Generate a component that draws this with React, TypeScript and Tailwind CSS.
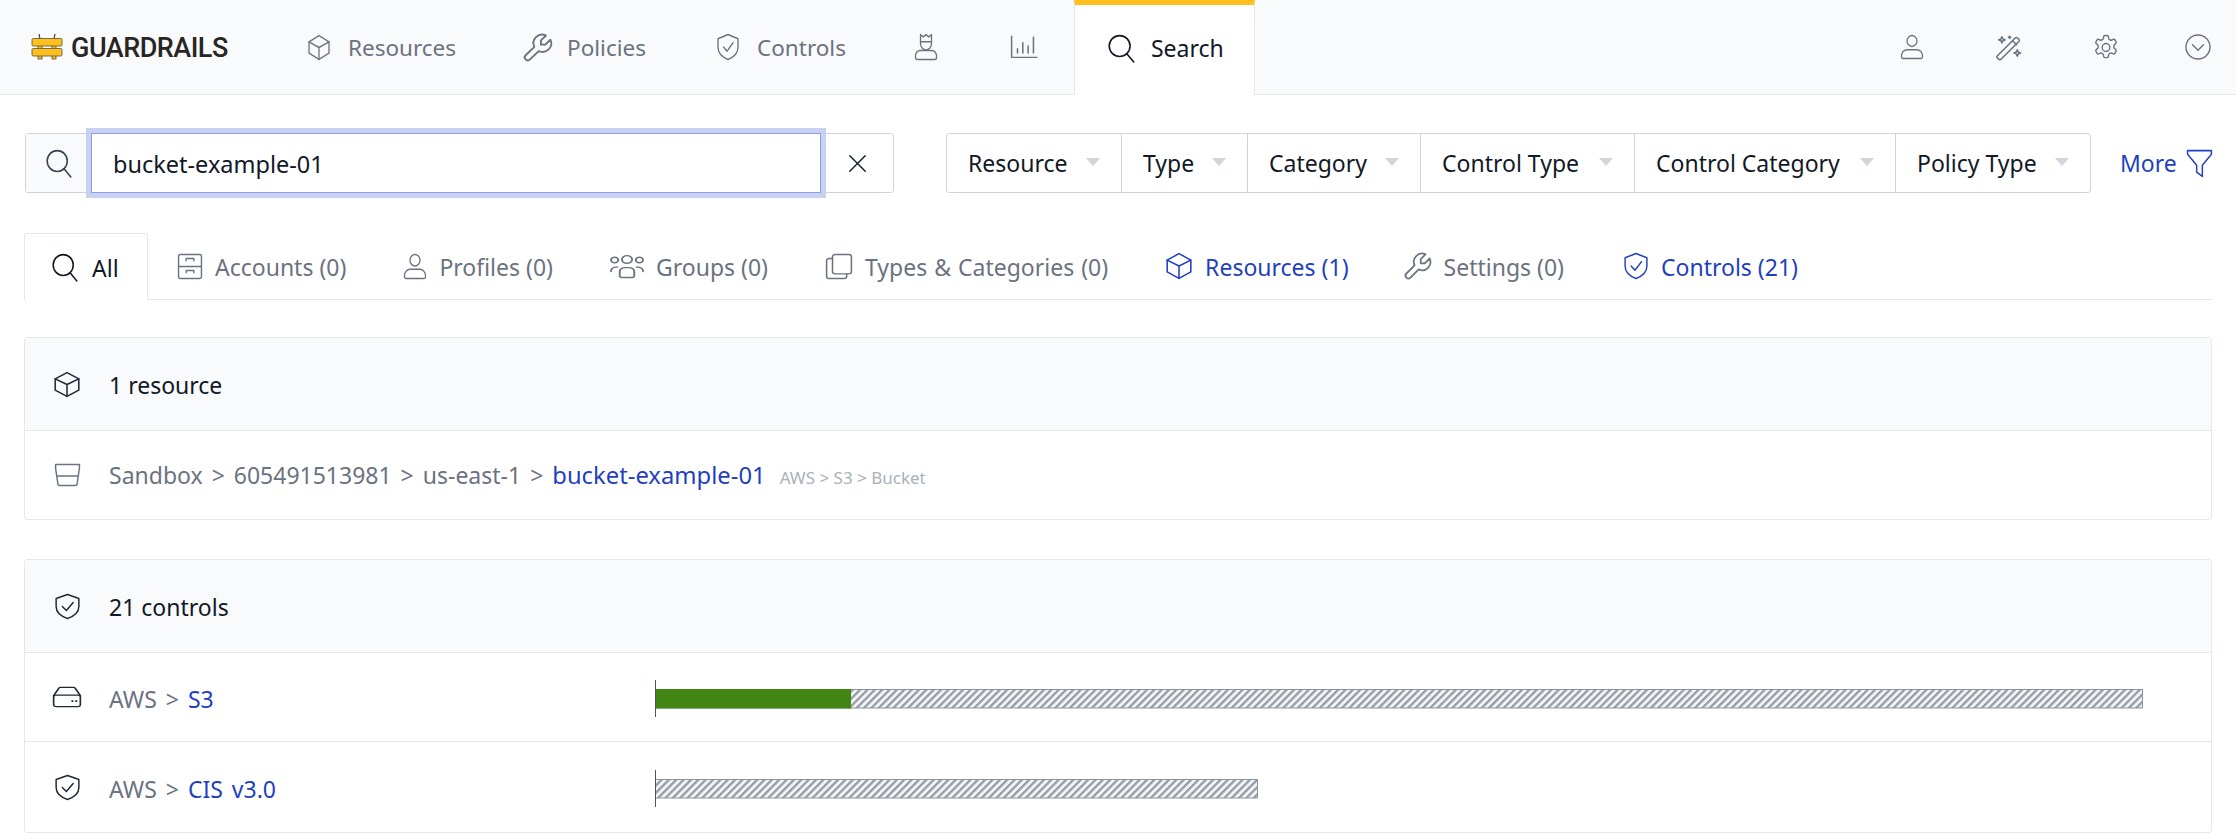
import type { ReactNode } from 'react';

const FONT = { fontFamily: '"Noto Sans", sans-serif' };

const Svg = ({ children, className = 'w-6 h-6' }: { children: ReactNode; className?: string }) => (
  <svg viewBox="1 1 22 22" preserveAspectRatio="none" fill="none" stroke="currentColor" strokeWidth={1.3} strokeLinecap="round" strokeLinejoin="round" className={`${className} shrink-0 overflow-visible`}>
    {children}
  </svg>
);

type IconProps = { className?: string };

const CubeIcon = ({ className }: IconProps) => (
  <Svg className={className}>
    <path d="M12 1.500l10 5.500v10l-10 5.500-10-5.500v-10z" />
    <path d="M2 7l10 5 10-5M12 12v10.500" />
  </Svg>
);
const WrenchIcon = ({ className }: IconProps) => (
  <Svg className={className}>
    <g transform="translate(24 0) scale(-1 1)">
      <path d="M7 10h3V7L6.500 3.500a6 6 0 0 1 8 8l6 6a2 2 0 0 1-3 3l-6-6a6 6 0 0 1-8-8L7 10" />
    </g>
  </Svg>
);
const ShieldIcon = ({ className }: IconProps) => (
  <Svg className={className}>
    <path d="M12 1.500l10 3.500v7c0 5-4 8.500-10 10.500-6-2-10-5.500-10-10.500V5z" />
    <path d="M7.500 12l3.500 3.500 6-7" />
  </Svg>
);
const SearchIcon = ({ className }: IconProps) => (
  <Svg className={className}>
    <circle cx="10.500" cy="10" r="8.500" />
    <path d="M16.500 16.500L22 23" />
  </Svg>
);
const UserIcon = ({ className }: IconProps) => (
  <Svg className={className}>
    <circle cx="12" cy="6.500" r="5" />
    <path d="M1.500 20a5.500 5.500 0 0 1 5.500-5.500h10a5.500 5.500 0 0 1 5.500 5.500v1a1.500 1.500 0 0 1-1.500 1.500H3A1.500 1.500 0 0 1 1.500 21z" />
  </Svg>
);
const WandIcon = ({ className }: IconProps) => (
  <Svg className={className}>
    <path d="M2 19.500L17.500 3.500a1 1 0 0 1 1.500 0l1.500 1.500a1 1 0 0 1 0 1.500L5 22.500a1 1 0 0 1-1.500 0L2 21a1 1 0 0 1 0-1.500z" />
    <path d="M15 6l3.500 3.500" />
    <path d="M6 2.500l.8 2 2 .8-2 .8-.8 2-.8-2-2-.8 2-.8zM12.500 2v2M11.500 3h2M19 14l.8 2 2 .8-2 .8-.8 2-.8-2-2-.8 2-.8z" />
  </Svg>
);
const GearIcon = ({ className }: IconProps) => (
  <Svg className={className}>
    <path d="M9.800 2.500c.1-.6.600-1 1.200-1h2c.6 0 1.100.4 1.200 1l.2 1.500c.1.400.4.800.8 1l.8.400c.4.200.900.200 1.300 0l1.400-.6c.6-.2 1.200 0 1.500.500l1 1.800c.3.500.2 1.200-.3 1.500l-1.200 1c-.3.300-.5.700-.5 1.200v.8c0 .500.2.900.5 1.200l1.200 1c.5.300.6 1 .3 1.500l-1 1.800c-.3.500-.9.700-1.500.500l-1.400-.6c-.4-.2-.9-.2-1.300 0l-.8.400c-.4.200-.7.600-.8 1l-.2 1.500c-.1.600-.6 1-1.200 1h-2c-.6 0-1.100-.4-1.200-1l-.2-1.500c-.1-.4-.4-.8-.8-1l-.8-.4c-.4-.2-.9-.2-1.300 0l-1.400.6c-.6.200-1.200 0-1.500-.5l-1-1.800c-.3-.5-.2-1.200.3-1.500l1.200-1c.3-.3.5-.7.5-1.200v-.8c0-.5-.2-.9-.5-1.200l-1.200-1c-.5-.3-.6-1-.3-1.500l1-1.800c.3-.5.9-.7 1.500-.5l1.400.6c.4.200.9.200 1.300 0l.8-.4c.4-.2.7-.6.8-1z" />
    <circle cx="12" cy="12" r="3.500" />
  </Svg>
);
const ChevronCircleIcon = ({ className }: IconProps) => (
  <Svg className={className}>
    <circle cx="12" cy="12" r="11" />
    <path d="M7 10l5 5 5-5" />
  </Svg>
);
const CrownUserIcon = ({ className }: IconProps) => (
  <Svg className={className}>
    <path d="M6.500 1.500l2.800 2 2.700-2 2.700 2 2.800-2v6H6.500z" />
    <path d="M6.500 7.500V9a5.500 5.500 0 0 0 11 0V7.500" />
    <path d="M1.500 21v-1.500a4.500 4.500 0 0 1 4.500-4.500h12a4.500 4.500 0 0 1 4.500 4.500V21a1.500 1.500 0 0 1-1.500 1.500H3A1.500 1.500 0 0 1 1.500 21z" />
  </Svg>
);
const ChartIcon = ({ className }: IconProps) => (
  <Svg className={className}>
    <path d="M1.500 2v19.500h21.500" />
    <path d="M6.500 13.500v4M11 8v9.500M15.500 11v6.500M20 3v14.500" />
  </Svg>
);
const DrawersIcon = ({ className }: IconProps) => (
  <Svg className={className}>
    <rect x="1.500" y="1.500" width="21" height="21" rx="1.500" />
    <path d="M1.500 12h21M8.500 7V5h7v2M8.500 17.500v-2h7v2" />
  </Svg>
);
const UsersIcon = ({ className }: IconProps) => (
  <Svg className={className}>
    <circle cx="12" cy="6" r="3.500" />
    <circle cx="3.500" cy="6.500" r="2.500" />
    <circle cx="20.500" cy="6.500" r="2.500" />
    <path d="M7 21v-4a3.500 3.500 0 0 1 3.500-3.500h3A3.500 3.500 0 0 1 17 17v4a1.500 1.500 0 0 1-1.500 1.500h-7A1.500 1.500 0 0 1 7 21z" />
    <path d="M1 17a4 4 0 0 1 3-4h1.500M23 17a4 4 0 0 0-3-4h-1.500" />
  </Svg>
);
const CopyIcon = ({ className }: IconProps) => (
  <Svg className={className}>
    <rect x="6.500" y="1.500" width="16" height="17" rx="2" />
    <path d="M6.500 5H3.500a2 2 0 0 0-2 2v13.500a2 2 0 0 0 2 2h13a2 2 0 0 0 2-2v-2" />
  </Svg>
);
const BucketIcon = ({ className }: IconProps) => (
  <Svg className={className}>
    <path d="M1.500 1.500h21v3.500l-2 15.500a2 2 0 0 1-2 2h-13a2 2 0 0 1-2-2L1.500 5z" />
    <path d="M2.700 13h18.600" />
  </Svg>
);
const DriveIcon = ({ className }: IconProps) => (
  <Svg className={className}>
    <path d="M1.500 10.500L5.500 2.500a1.500 1.500 0 0 1 1.500-1h10a1.500 1.500 0 0 1 1.500 1l4 8" />
    <rect x="1.500" y="10" width="21" height="12.500" rx="2" />
    <path d="M15.500 16.500h1.500M18.500 16.500H20" strokeWidth={1.800} strokeLinecap="butt" />
  </Svg>
);
const CloseIcon = ({ className }: IconProps) => (
  <Svg className={className}>
    <path d="M2 2l20 20M22 2L2 22" strokeWidth={1.800} />
  </Svg>
);
const FunnelIcon = ({ className }: IconProps) => (
  <Svg className={className}>
    <path d="M1.500 1.500h21v3l-8 9v9l-5-3.500v-5.500l-8-9z" />
  </Svg>
);

// Guardrails mark: two yellow rails on short posts
const Logo = () => (
  <svg viewBox="0 0 32 28" className="w-8 h-7 shrink-0">
    <path d="M8 1l1 5M24 1l-1 5" stroke="#3f3a2c" strokeWidth={1.200} fill="none" />
    <rect x="7" y="10" width="4" height="16" fill="#fbbf24" stroke="#57503a" strokeWidth={0.8} />
    <rect x="21" y="10" width="4" height="16" fill="#fbbf24" stroke="#57503a" strokeWidth={0.8} />
    <rect x="1" y="5.500" width="30" height="7.500" rx="1.200" fill="#fdc01c" stroke="#57503a" strokeWidth={0.8} />
    <rect x="1" y="15.500" width="30" height="7.500" rx="1.200" fill="#fdc01c" stroke="#57503a" strokeWidth={0.8} />
  </svg>
);

const NAV = [
  { icon: <CubeIcon className="w-[22px] h-[25px]" />, label: 'Resources', pad: 'px-[34px]' },
  { icon: <WrenchIcon className="w-[32px] h-[31px] -ml-[2px] -mr-[5px]" />, label: 'Policies', pad: 'pl-[34px] pr-[37px]' },
  { icon: <ShieldIcon className="w-[22px] h-[26px]" />, label: 'Controls', pad: 'px-[34px]' },
];

const FILTERS = [
  { label: 'Resource', width: 'w-[174px]' },
  { label: 'Type', width: 'w-[126px]' },
  { label: 'Category', width: 'w-[173px]' },
  { label: 'Control Type', width: 'w-[214px]' },
  { label: 'Control Category', width: 'w-[261px]' },
  { label: 'Policy Type', width: 'w-[195px]' },
];

const TABS = [
  { icon: <DrawersIcon className="w-[24px] h-[25px]" />, label: 'Accounts (0)', tone: 'text-[#6b7280] pl-[30px] pr-[29px]' },
  { icon: <UserIcon className="w-[22px] h-[25px]" />, label: 'Profiles (0)', tone: 'text-[#6b7280] px-[29px]' },
  { icon: <UsersIcon className="w-[32px] h-[24px]" />, label: 'Groups (0)', tone: 'text-[#6b7280] px-[29px]' },
  { icon: <CopyIcon className="w-[26px] h-[25px]" />, label: 'Types & Categories (0)', tone: 'text-[#6b7280] px-[29px] [word-spacing:1px]' },
  { icon: <CubeIcon className="w-[26px] h-[26px]" />, label: 'Resources (1)', tone: 'text-[#1f3fc0] pl-[29px] pr-[27px]' },
  { icon: <WrenchIcon className="w-[30px] h-[30px] -mx-[2px]" />, label: 'Settings (0)', tone: 'text-[#6b7280] pl-[29px] pr-[31px]' },
  { icon: <ShieldIcon className="w-[24px] h-[26px]" />, label: 'Controls (21)', tone: 'text-[#1f3fc0] px-[29px]' },
];

const ProgressBar = ({ id, width, done }: { id: string; width: number; done: number }) => (
  <svg width={width + 1} height={37} className="block shrink-0 mt-[2px]">
    <defs>
      <pattern id={id} patternUnits="userSpaceOnUse" width="5.200" height="5.200" patternTransform="rotate(45)">
        <rect width="5.200" height="5.200" fill="#f3f4f6" />
        <rect width="2.300" height="5.200" fill="#959ca5" />
      </pattern>
    </defs>
    <rect x="0.500" y="9.500" width={width} height="18.500" fill={`url(#${id})`} stroke="#8b949e" strokeWidth={1} />
    {done > 0 && <rect x="0" y="9" width={done} height="19.500" fill="#428513" />}
    <path d="M0.500 0v37" stroke="#4b5563" strokeWidth={1} />
  </svg>
);

// fixed slot so every row's text starts at the same x
const IconSlot = ({ children }: { children: ReactNode }) => (
  <div className="w-[28px] flex justify-center shrink-0">{children}</div>
);

const Card = ({ icon, title, children }: { icon: ReactNode; title: string; children: ReactNode }) => (
  <section className="border border-[#e5e7eb] rounded-[3px] bg-white">
    <header className="h-[93px] flex items-center pl-[28px] gap-[28px] bg-[#f9fafb] border-b border-[#e5e7eb] text-[#111827]">
      <IconSlot>{icon}</IconSlot>
      <span className="pt-[2px]">{title}</span>
    </header>
    {children}
  </section>
);

export default function App() {
  return (
    <div style={FONT} className="bg-white h-[835px] overflow-hidden text-[23px] leading-[30px]">
      {/* Top navigation */}
      <nav className="h-[95px] flex bg-[#f9fafb] border-b border-[#e5e7eb] text-[#6b7280] text-[22.5px]">
        <div className="w-[274px] flex items-center pl-[31px] gap-[8px] text-[#292524]">
          <Logo />
          <span style={{ fontFamily: 'Roboto, sans-serif' }} className="pt-[2px] text-[27px] font-medium tracking-[-0.5px]">GUARDRAILS</span>
        </div>
        {NAV.map((item) => (
          <div key={item.label} className={`flex items-center gap-[18px] ${item.pad}`}>
            {item.icon}
            <span className="pt-[2px]">{item.label}</span>
          </div>
        ))}
        <div className="flex items-center px-[35px]">
          <CrownUserIcon className="w-[22px] h-[26px]" />
        </div>
        <div className="flex items-center pl-[39px] pr-[37px]">
          <ChartIcon className="w-[26px] h-[24px]" />
        </div>
        <div className="relative w-[181px] -mb-px flex items-center gap-[16px] pl-[33px] pb-[4px] bg-white border-x border-[#e5e7eb] border-t-[5px] border-t-[#fdc01c] text-[#111827] text-[23px]">
          <SearchIcon className="w-[27px] h-[27px]" />
          <span>Search</span>
        </div>
        <div className="ml-auto flex items-center gap-[71px] pr-[25px]">
          <div className="w-[26px] flex justify-center"><UserIcon className="w-[22px] h-[24px]" /></div>
          <div className="w-[26px] flex justify-center"><WandIcon className="w-[26px] h-[25px]" /></div>
          <div className="w-[26px] flex justify-center"><GearIcon className="w-[24px] h-[25px]" /></div>
          <div className="w-[26px] -ml-[5px] flex justify-center"><ChevronCircleIcon className="w-[24px] h-[24px]" /></div>
        </div>
      </nav>

      <main className="px-[24px]">
        {/* Search and filter row */}
        <div className="flex items-center mt-[38px] h-[60px]">
          <div className="w-[869px] h-full flex ml-px border border-[#d1d5db] rounded-[3px]">
            <div className="w-[65px] flex items-center justify-center bg-[#f9fafb] text-[#374151]">
              <SearchIcon className="w-[26px] h-[27px]" />
            </div>
            <input
              readOnly
              value="bucket-example-01"
              className="relative z-10 flex-1 -my-px px-[21px] pt-[2px] text-[23.5px] text-[#111827] bg-white border border-[#8b9fe6] ring-[5px] ring-[#c9d1f2] outline-none"
            />
            <div className="w-[72px] flex items-center justify-center text-[#111827]">
              <CloseIcon className="w-[17px] h-[17px]" />
            </div>
          </div>
          <div className="flex ml-[52px] h-full border border-[#d1d5db] rounded-[3px] text-[#111827]">
            {FILTERS.map((f, i) => (
              <div key={f.label} className={`${f.width} flex items-center justify-between pl-[21px] pr-[21px] ${i > 0 ? 'border-l border-[#d1d5db]' : ''}`}>
                <span>{f.label}</span>
                <span className="w-0 h-0 border-x-[7px] border-x-transparent border-t-[8px] border-t-[#d1d5db] -mt-[2px]" />
              </div>
            ))}
          </div>
          <div className="flex items-center gap-[10px] ml-[29px] text-[#1f3fc0]">
            <span>More</span>
            <FunnelIcon className="w-[25px] h-[27px]" />
          </div>
        </div>

        {/* Result tabs */}
        <div className="flex h-[67px] mt-[40px] border-b border-[#e5e7eb]">
          <div className="w-[124px] h-[67px] flex items-center gap-[14px] pl-[27px] bg-white border-x border-t border-[#e5e7eb] rounded-t-[3px] text-[#111827]">
            <SearchIcon className="w-[26px] h-[27px]" />
            <span className="pt-[2px]">All</span>
          </div>
          {TABS.map((tab) => (
            <div key={tab.label} className={`flex items-center gap-[13px] ${tab.tone}`}>
              {tab.icon}
              <span className="pt-[2px]">{tab.label}</span>
            </div>
          ))}
        </div>

        <div className="mt-[37px]">
          <Card icon={<CubeIcon className="w-[26px] h-[25px] text-[#1f2937]" />} title="1 resource">
            <div className="h-[88px] flex items-center pl-[28px] gap-[28px] text-[#6b7280]">
              <IconSlot><BucketIcon className="w-[25px] h-[22px]" /></IconSlot>
              <div className="pt-[3px] [word-spacing:3px]">
                Sandbox &gt; 605491513981 &gt; us-east-1 &gt; <span className="text-[23.8px] text-[#1f3fc0]">bucket-example-01</span>
                <span className="ml-[14px] text-[17px] text-[#aab0b8] [word-spacing:0px]">AWS &gt; S3 &gt; Bucket</span>
              </div>
            </div>
          </Card>
        </div>

        <div className="mt-[39px]">
          <Card icon={<ShieldIcon className="w-[25px] h-[25px] text-[#1f2937]" />} title="21 controls">
            <div className="h-[89px] flex items-center border-b border-[#e5e7eb]">
              <div className="w-[630px] flex items-center pl-[28px] gap-[28px] text-[#6b7280]">
                <IconSlot><DriveIcon className="w-[28px] h-[20px] text-[#1f2937]" /></IconSlot>
                <div className="pt-[3px] [word-spacing:3px]">AWS &gt; <span className="text-[#1f3fc0]">S3</span></div>
              </div>
              <ProgressBar id="hatch-s3" width={1487} done={196} />
            </div>
            <div className="h-[90px] flex items-center">
              <div className="w-[630px] flex items-center pl-[28px] gap-[28px] text-[#6b7280]">
                <IconSlot><ShieldIcon className="w-[25px] h-[25px] text-[#1f2937]" /></IconSlot>
                <div className="pt-[3px] [word-spacing:3px]">AWS &gt; <span className="text-[#1f3fc0]">CIS v3.0</span></div>
              </div>
              <ProgressBar id="hatch-cis" width={602} done={0} />
            </div>
          </Card>
        </div>
      </main>
    </div>
  );
}
